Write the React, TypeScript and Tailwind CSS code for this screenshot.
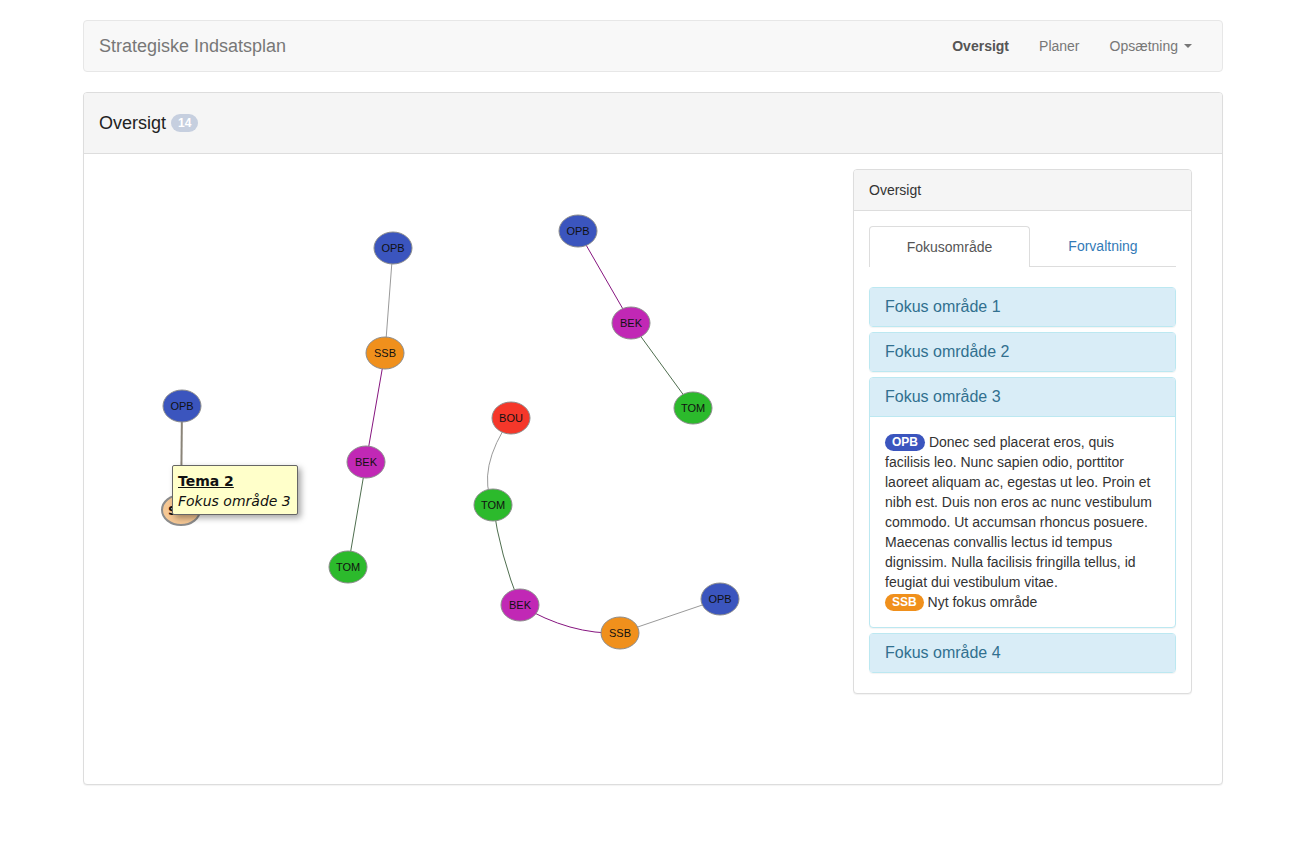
import React from "react";

type Node = { id: string; label: string; x: number; y: number; fill: string };

const BLUE = "#3b55be";
const ORANGE = "#f0901c";
const PURPLE = "#c128b5";
const GREEN = "#2cba2c";
const RED = "#f5372a";

// node positions are relative to the graph canvas (col-md-8 content box)
const nodes: Node[] = [
  { id: "a1", label: "OPB", x: 294, y: 79, fill: BLUE },
  { id: "a2", label: "SSB", x: 286, y: 184, fill: ORANGE },
  { id: "a3", label: "BEK", x: 267, y: 293, fill: PURPLE },
  { id: "a4", label: "TOM", x: 249, y: 398, fill: GREEN },
  { id: "b1", label: "OPB", x: 479, y: 62, fill: BLUE },
  { id: "b2", label: "BEK", x: 532, y: 154, fill: PURPLE },
  { id: "b3", label: "TOM", x: 594, y: 239, fill: GREEN },
  { id: "c1", label: "OPB", x: 83, y: 237, fill: BLUE },
  { id: "d1", label: "BOU", x: 412, y: 249, fill: RED },
  { id: "d2", label: "TOM", x: 394, y: 336, fill: GREEN },
  { id: "d3", label: "BEK", x: 421, y: 436, fill: PURPLE },
  { id: "d4", label: "SSB", x: 521, y: 464, fill: ORANGE },
  { id: "d5", label: "OPB", x: 621, y: 430, fill: BLUE },
];

const edges = [
  { d: "M294 79 L286 184", stroke: "#9a9a9a", w: 1 },
  { d: "M286 184 L267 293", stroke: "#86157f", w: 1 },
  { d: "M267 293 L249 398", stroke: "#4f6e4f", w: 1 },
  { d: "M479 62 L532 154", stroke: "#86157f", w: 1 },
  { d: "M532 154 L594 239", stroke: "#4f6e4f", w: 1 },
  { d: "M83 237 L82 341", stroke: "#8a8478", w: 2 },
  { d: "M412 249 Q377 300 394 336", stroke: "#9a9a9a", w: 1 },
  { d: "M394 336 Q401 386 421 436", stroke: "#4f6e4f", w: 1 },
  { d: "M421 436 Q471 466 521 464", stroke: "#86157f", w: 1 },
  { d: "M521 464 L621 430", stroke: "#9a9a9a", w: 1 },
];

function Graph() {
  return (
    <div className="relative h-[600px] w-full">
      <svg width="740" height="600" className="absolute left-0 top-0">
        {edges.map((e, i) => (
          <path key={i} d={e.d} fill="none" stroke={e.stroke} strokeWidth={e.w} />
        ))}
        {nodes.map((n) => (
          <g key={n.id}>
            <ellipse cx={n.x} cy={n.y} rx={19} ry={16} fill={n.fill} stroke="#8c8c8c" strokeWidth={1} />
            <text
              x={n.x}
              y={n.y + 4}
              textAnchor="middle"
              fontSize="11"
              fontFamily="'Liberation Sans', Arial, sans-serif"
              fill="#111"
            >
              {n.label}
            </text>
          </g>
        ))}
        {/* hovered node, partly under the tooltip */}
        <ellipse cx={82} cy={341} rx={19} ry={15} fill="#f5c794" stroke="#8c8c8c" strokeWidth={2} />
        <text x={82} y={346} textAnchor="middle" fontSize="12" fontWeight="bold" fontFamily="'DejaVu Sans', sans-serif" fill="#111">
          SSB
        </text>
      </svg>

      {/* tooltip */}
      <div className="absolute left-[73px] top-[296px] w-[126px] rounded-[2px] border border-[#666] bg-[#ffffca] px-[5px] pb-[3px] pt-[5px] font-['DejaVu_Sans',sans-serif] text-[14px] leading-[20px] text-[#111] shadow-[3px_3px_6px_rgba(0,0,0,0.35)]">
        <div className="font-bold underline">Tema 2</div>
        <div className="italic">Fokus område 3</div>
      </div>
    </div>
  );
}

function Label({ text, color }: { text: string; color: string }) {
  return (
    <span
      className={`inline-block rounded-full px-[7px] pb-[2px] pt-[1px] align-[1px] text-[12px] font-bold leading-[14px] text-white ${color}`}
    >
      {text}
    </span>
  );
}

function AccordionHeading({ title, open }: { title: string; open?: boolean }) {
  return (
    <div
      className={`bg-[#d9edf7] px-[15px] py-[9px] text-[16px] leading-[20px] text-[#31708f] ${
        open ? "border-b border-[#bce8f1]" : ""
      }`}
    >
      {title}
    </div>
  );
}

function SidePanel() {
  return (
    <div className="rounded-[4px] border border-[#ddd] bg-white shadow-[0_1px_1px_rgba(0,0,0,0.05)]">
      <div className="rounded-t-[3px] border-b border-[#ddd] bg-[#f5f5f5] px-[15px] py-[10px] text-[14px] leading-[20px] text-[#333]">
        Oversigt
      </div>
      <div className="px-[15px] pb-[20px] pt-[15px]">
        {/* tabs */}
        <div className="flex text-[14px] leading-[20px]">
          <div className="w-[161px] rounded-t-[4px] border border-b-0 border-[#ddd] bg-white py-[10px] text-center text-[#555]">
            Fokusområde
          </div>
          <div className="flex-1 border-b border-[#ddd] py-[10px] text-center text-[#337ab7]">Forvaltning</div>
        </div>

        <div className="mt-[20px] flex flex-col gap-[5px]">
          <div className="rounded-[4px] border border-[#bce8f1] shadow-[0_1px_1px_rgba(0,0,0,0.05)]">
            <AccordionHeading title="Fokus område 1" />
          </div>
          <div className="rounded-[4px] border border-[#bce8f1] shadow-[0_1px_1px_rgba(0,0,0,0.05)]">
            <AccordionHeading title="Fokus omrdåde 2" />
          </div>
          <div className="overflow-hidden rounded-[4px] border border-[#bce8f1] bg-white shadow-[0_1px_1px_rgba(0,0,0,0.05)]">
            <AccordionHeading title="Fokus område 3" open />
            <div className="p-[15px] text-[14px] leading-[20px] text-[#333]">
              <Label text="OPB" color="bg-[#3b55be]" /> Donec sed placerat eros, quis facilisis leo. Nunc sapien odio,
              porttitor laoreet aliquam ac, egestas ut leo. Proin et nibh est. Duis non eros ac nunc vestibulum commodo.
              Ut accumsan rhoncus posuere. Maecenas convallis lectus id tempus dignissim. Nulla facilisis fringilla
              tellus, id feugiat dui vestibulum vitae.
              <br />
              <Label text="SSB" color="bg-[#f0901c]" /> Nyt fokus område
            </div>
          </div>
          <div className="rounded-[4px] border border-[#bce8f1] shadow-[0_1px_1px_rgba(0,0,0,0.05)]">
            <AccordionHeading title="Fokus område 4" />
          </div>
        </div>
      </div>
    </div>
  );
}

export default function App() {
  return (
    <div className="min-h-screen bg-white pt-[20px] font-['Liberation_Sans',Arial,sans-serif] text-[14px] text-[#333]">
      <div className="ml-[83px] w-[1140px]">
        {/* navbar */}
        <nav className="flex h-[52px] items-center justify-between rounded-[4px] border border-[#e7e7e7] bg-[#f8f8f8]">
          <span className="px-[15px] text-[18px] leading-[20px] text-[#777]">Strategiske Indsatsplan</span>
          <ul className="flex pr-[15px] text-[14px] leading-[20px] text-[#777]">
            <li className="px-[15px] py-[15px] font-bold text-[#555]">Oversigt</li>
            <li className="px-[15px] py-[15px]">Planer</li>
            <li className="flex items-center px-[15px] py-[15px]">
              Opsætning
              <span className="ml-[6px] inline-block h-0 w-0 border-x-[4px] border-t-[4px] border-x-transparent border-t-[#777]" />
            </li>
          </ul>
        </nav>

        {/* main panel */}
        <div className="mt-[20px] rounded-[4px] border border-[#ddd] bg-white shadow-[0_1px_1px_rgba(0,0,0,0.05)]">
          <div className="flex h-[61px] items-center rounded-t-[3px] border-b border-[#ddd] bg-[#f5f5f5] px-[15px]">
            <span className="text-[18px] text-[#222]">Oversigt</span>
            <span className="ml-[5px] rounded-[10px] bg-[#c6cfdf] px-[7px] py-[2px] text-[12px] font-bold leading-[14px] text-white">
              14
            </span>
          </div>
          <div className="flex p-[15px]">
            <div className="w-[739px]">
              <Graph />
            </div>
            <div className="flex-1 px-[15px]">
              <SidePanel />
            </div>
          </div>
        </div>
      </div>
    </div>
  );
}
